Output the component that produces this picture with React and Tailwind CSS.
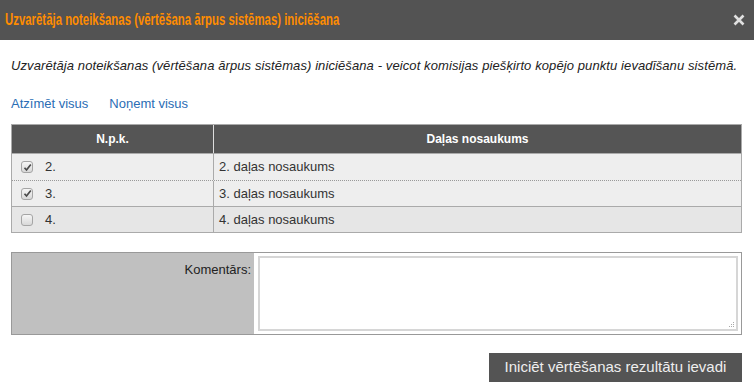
import React from "react";

const rows = [
  { n: "2.", name: "2. daļas nosaukums", checked: true, bg: "bg-[#eeeeee]", border: "h-[27px] border-b border-dotted border-b-[#999]" },
  { n: "3.", name: "3. daļas nosaukums", checked: true, bg: "bg-[#eeeeee]", border: "h-[26px] border-b border-b-[#aaa]" },
  { n: "4.", name: "4. daļas nosaukums", checked: false, bg: "bg-[#e6e6e6]", border: "h-[25px]" },
];

function Check({ checked }) {
  return (
    <span className="w-[12px] h-[12px] rounded-[3px] border border-[#a5a5a5] bg-gradient-to-b from-[#f6f6f6] to-[#d8d8d8] flex items-center justify-center">
      {checked && (
        <svg width="9" height="9" viewBox="0 0 9 9">
          <path d="M1.5 4.8 L3.5 7 L7.8 1.5" stroke="#4a4a4a" strokeWidth="1.7" fill="none" />
        </svg>
      )}
    </span>
  );
}

export default function App() {
  return (
    <div className="w-[754px] h-[391px] bg-white overflow-hidden font-['Liberation_Sans',Arial,sans-serif] text-[#222]">
      <div className="h-[40px] bg-[#535353] flex items-center justify-between pl-[5px] pr-[9px]">
        <div className="text-[#ff8c00] font-bold text-[17px] font-['Liberation_Sans',sans-serif] scale-x-[0.67] origin-left whitespace-nowrap">
          Uzvarētāja noteikšanas (vērtēšana ārpus sistēmas) iniciēšana
        </div>
        <svg width="12" height="12" viewBox="0 0 12 12">
          <path d="M1.5 1.5 L10.5 10.5 M10.5 1.5 L1.5 10.5" stroke="#e0e0e0" strokeWidth="2.6" />
        </svg>
      </div>
      <div className="px-[11px]">
        <p className="mt-[18px] italic text-[13px] leading-[15px] tracking-[0.1px] text-[#222] whitespace-nowrap">
          Uzvarētāja noteikšanas (vērtēšana ārpus sistēmas) iniciēšana - veicot komisijas piešķirto kopējo punktu ievadīšanu sistēmā.
        </p>
        <div className="mt-[23px] flex gap-[21px] text-[13px] leading-[15px] text-[#2a6db5]">
          <span>Atzīmēt visus</span>
          <span>Noņemt visus</span>
        </div>
        <div className="mt-[13px] w-[731px] border border-[#aaa]">
          <div className="flex h-[29px] bg-[#555555] text-white text-[12px] font-bold border-b border-[#aaa]">
            <div className="w-[202px] flex items-center justify-center border-r border-[#ddd]">N.p.k.</div>
            <div className="flex-1 flex items-center justify-center">Daļas nosaukums</div>
          </div>
          {rows.map((r, i) => (
            <div key={i} className={`flex text-[13px] text-[#333] ${r.bg} ${r.border}`}>
              <div className="w-[202px] flex items-center pl-[9px] gap-[12px] border-r border-[#aaa]">
                <Check checked={r.checked} />
                <span>{r.n}</span>
              </div>
              <div className="flex-1 flex items-center pl-[5px]">{r.name}</div>
            </div>
          ))}
        </div>
        <div className="mt-[19px] w-[731px] h-[83px] border border-[#999] flex">
          <div className="w-[242px] bg-[#c0c0c0] text-[13px] text-[#222] text-right pr-[3px] pt-[7px]">Komentārs:</div>
          <div className="flex-1 bg-white p-[3px] pl-[4px]">
            <div className="w-full h-full border-2 border-[#d6d6d6] relative">
              <svg className="absolute right-[1px] bottom-[1px]" width="7" height="7" viewBox="0 0 7 7">
                <g fill="#aaa">
                  <rect x="5" y="1" width="1" height="1" />
                  <rect x="3" y="3" width="1" height="1" />
                  <rect x="5" y="3" width="1" height="1" />
                  <rect x="1" y="5" width="1" height="1" />
                  <rect x="3" y="5" width="1" height="1" />
                  <rect x="5" y="5" width="1" height="1" />
                </g>
              </svg>
            </div>
          </div>
        </div>
        <div className="mt-[18px] flex justify-end pr-[1px]">
          <div className="h-[29px] w-[253px] bg-[#545454] text-[#eeeeee] text-[15px] flex items-center justify-center">
            Iniciēt vērtēšanas rezultātu ievadi
          </div>
        </div>
      </div>
    </div>
  );
}
